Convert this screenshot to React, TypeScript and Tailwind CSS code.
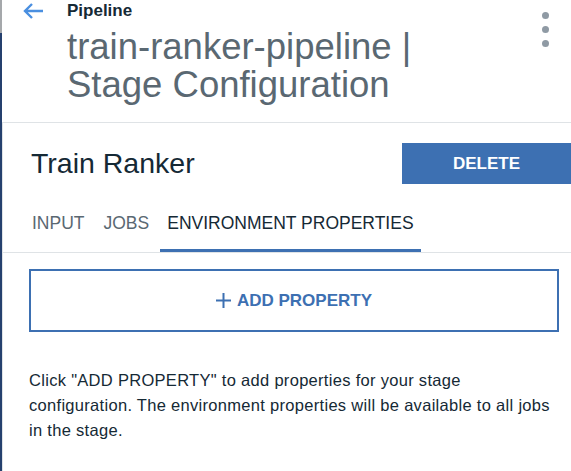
import React from "react";

export default function App() {
  return (
    <div
      className="w-[571px] h-[471px] bg-white flex overflow-hidden"
      style={{ fontFamily: '"Liberation Sans", Arial, sans-serif' }}
    >
      <div className="w-[2px] flex flex-col shrink-0">
        <div className="h-[33px] bg-[#a5a8ab]" />
        <div className="flex-1 bg-[#25406e]" />
      </div>
      <div className="flex-1 flex flex-col">
        <header className="h-[122px] relative pl-[20px]">
          <div className="flex items-center h-[22px]">
            <svg width="22" height="18" viewBox="0 0 22 18" className="mr-[23px]">
              <path d="M21 9H3M10 2L3 9l7 7" fill="none" stroke="#4a8fe0" strokeWidth="2.4" />
            </svg>
            <span className="text-[17px] font-bold text-[#152935] leading-[22px]">Pipeline</span>
          </div>
          <h1 className="ml-[45px] mt-[6px] text-[36.5px] leading-[38px] text-[#5a6872] font-normal">
            train-ranker-pipeline |<br />Stage Configuration
          </h1>
          <div className="absolute right-[22px] top-[12px] flex flex-col gap-[7px]">
            <div className="w-[7px] h-[7px] rounded-full bg-[#8f9aa4]" />
            <div className="w-[7px] h-[7px] rounded-full bg-[#8f9aa4]" />
            <div className="w-[7px] h-[7px] rounded-full bg-[#8f9aa4]" />
          </div>
        </header>
        <section className="flex-1 border-t border-l border-[#dfe3e6]">
          <div className="flex items-center justify-between pl-[28px] pt-[20px]">
            <h2 className="text-[28.5px] text-[#152935] leading-[41px]">Train Ranker</h2>
            <button className="w-[169px] h-[41px] bg-[#3d70b2] text-white text-[17px] font-bold">
              DELETE
            </button>
          </div>
          <div className="mt-[20px] flex border-b border-[#dfe3e6] pl-[21px] items-end">
            <div className="px-[8px] text-[17.5px] leading-[20px] text-[#5a6872] pt-[9px] pb-[19px]">INPUT</div>
            <div className="px-[8px] ml-[3px] text-[17.5px] leading-[20px] text-[#5a6872] pt-[9px] pb-[19px]">JOBS</div>
            <div className="px-[7px] ml-[3px] text-[17.5px] leading-[20px] text-[#152935] pt-[9px] pb-[16px] border-b-[3px] border-[#3d70b2]">
              ENVIRONMENT PROPERTIES
            </div>
          </div>
          <div className="pl-[26px] pr-[12px] pt-[16px]">
            <button className="w-full h-[63px] border-2 border-[#3d70b2] flex items-center justify-center gap-[6px] text-[#3d70b2] text-[17px] font-bold">
              <svg width="15" height="15" viewBox="0 0 15 15">
                <path d="M7.5 0v15M0 7.5h15" stroke="#3d70b2" strokeWidth="2" />
              </svg>
              ADD PROPERTY
            </button>
            <p className="mt-[36px] max-w-[530px] text-[16.5px] tracking-[0.3px] leading-[25px] text-[#152935]">
              Click "ADD PROPERTY" to add properties for your stage configuration. The environment properties will be available to all jobs in the stage.
            </p>
          </div>
        </section>
      </div>
    </div>
  );
}
